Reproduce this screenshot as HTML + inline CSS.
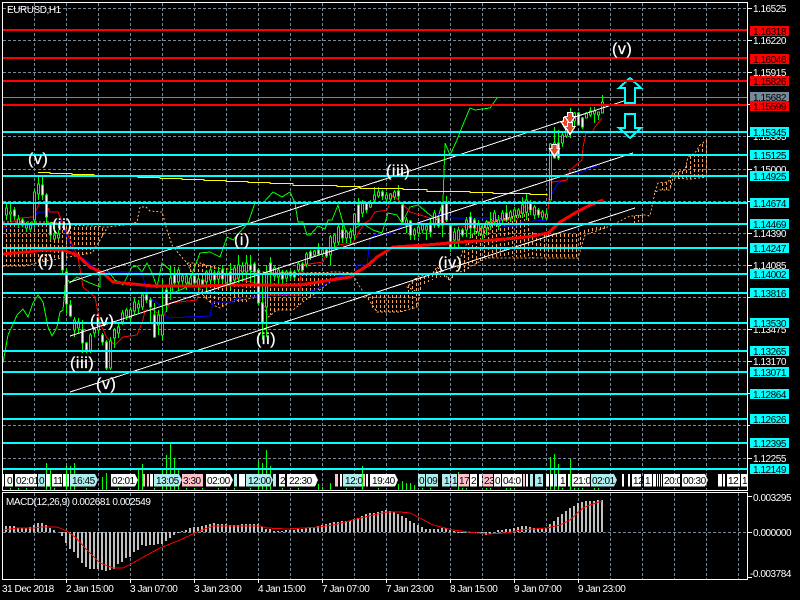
<!DOCTYPE html>
<html><head><meta charset="utf-8"><title>EURUSD,H1</title>
<style>
html,body{margin:0;padding:0;background:#000;width:800px;height:600px;overflow:hidden}
svg{display:block}
text{font-family:"Liberation Sans",sans-serif;font-size:10px;letter-spacing:-.45px}
.w{font-size:16px;fill:#fff;stroke:#fff;stroke-width:.25;letter-spacing:.6px}
</style></head><body>
<svg width="800" height="600" viewBox="0 0 800 600" xmlns="http://www.w3.org/2000/svg">
<rect width="800" height="600" fill="#000"/>
<g shape-rendering="crispEdges" fill="none">
<!-- grid -->
<path stroke="#778899" stroke-dasharray="3 2" d="M34.5 3V490M66.5 3V490M98.5 3V490M130.5 3V490M162.5 3V490M194.5 3V490M226.5 3V490M258.5 3V490M290.5 3V490M322.5 3V490M354.5 3V490M386.5 3V490M418.5 3V490M450.5 3V490M482.5 3V490M514.5 3V490M546.5 3V490M578.5 3V490M610.5 3V490M642.5 3V490M674.5 3V490M706.5 3V490M738.5 3V490"/>
<path stroke="#778899" stroke-dasharray="3 2" d="M34.5 493V579M66.5 493V579M98.5 493V579M130.5 493V579M162.5 493V579M194.5 493V579M226.5 493V579M258.5 493V579M290.5 493V579M322.5 493V579M354.5 493V579M386.5 493V579M418.5 493V579M450.5 493V579M482.5 493V579M514.5 493V579M546.5 493V579M578.5 493V579M610.5 493V579M642.5 493V579M674.5 493V579M706.5 493V579M738.5 493V579"/>
<path stroke="#778899" stroke-dasharray="3 2" d="M3 8.5H747M3 40.5H747M3 72.5H747M3 104.5H747M3 136.5H747M3 169.5H747M3 201.5H747M3 233.5H747M3 265.5H747M3 297.5H747M3 329.5H747M3 361.5H747M3 393.5H747M3 425.5H747M3 458.5H747M3 532.5H747"/>
<!-- cloud hatching -->
<path stroke="#F4A460" stroke-dasharray="3 2" d="M6.5 224V266M10.5 224V266M14.5 224V266M18.5 224V266M22.5 224V266M26.5 224V265M30.5 224V263M34.5 224V262M38.5 224V262M42.5 224V261M46.5 224V260M50.5 224V259M54.5 225V258M58.5 225V258M62.5 225V257M66.5 226V257M70.5 226V256M74.5 227V256M78.5 227V255M82.5 227V255M86.5 227V254M90.5 227V253M94.5 227V248M98.5 227V243M102.5 228V237M190.5 264V282M194.5 264V288M198.5 264V292M202.5 264V295M206.5 265V299M210.5 265V303M214.5 266V305M218.5 267V307M222.5 268V306M226.5 268V304M230.5 268V302M234.5 269V302M238.5 269V302M242.5 269V302M246.5 270V302M250.5 270V300M254.5 270V299M258.5 271V298M262.5 273V305M266.5 273V312M270.5 273V315M274.5 273V312M278.5 273V310M282.5 273V310M286.5 273V310M290.5 273V310M294.5 273V309M298.5 273V305M302.5 273V302M306.5 273V299M310.5 273V296M314.5 273V293M318.5 273V290M322.5 273V287M326.5 273V284M330.5 273V281M334.5 273V278M368.5 297V300M372.5 296V308M376.5 295V311M380.5 295V312M384.5 295V312M388.5 295V312M392.5 295V312M396.5 295V312M400.5 295V312M404.5 295V311M408.5 285V310M412.5 281V309M416.5 278V307M420.5 277V293M424.5 276V284M428.5 275V282M432.5 274V280M436.5 270V278M440.5 271V277M444.5 274V278M448.5 277V280M452.5 275V278M464.5 250V272M468.5 242V269M472.5 235V266M476.5 231V264M480.5 228V262M484.5 225V259M488.5 222V258M492.5 220V258M496.5 219V258M500.5 218V257M504.5 218V257M508.5 217V257M512.5 216V257M516.5 215V257M520.5 215V257M524.5 214V258M528.5 213V258M532.5 232V258M536.5 233V258M540.5 233V258M544.5 234V258M548.5 234V258M552.5 234V258M556.5 234V258M560.5 234V258M564.5 234V258M568.5 234V258M572.5 234V258M576.5 234V258M580.5 232V246M584.5 230V236M588.5 229V234M592.5 228V233M596.5 227V232M600.5 227V231M604.5 226V230M634.5 216V223M638.5 215V222M642.5 215V222M662.5 183V190M666.5 182V190M670.5 180V190M674.5 173V178M678.5 172V178M682.5 171V179M686.5 165V179M690.5 156V179M694.5 154V178M698.5 149V178M702.5 144V177M706.5 140V177"/>
<path stroke="#F4A460" stroke-dasharray="2 2" d="M3 222L50 222L70 225L107 227L125 225L137 222L140 207L146 207L150 211L162 212L167 230L172 245L180 255L187 263L200 263L215 268L258 272L300 273L340 272L352 273L360 287L367 297L377 312L400 312L417 307L420 293L407 287L417 277L433 273L437 267L450 280L457 270L463 250L473 233L490 220L530 212"/>
<path stroke="#F4A460" stroke-dasharray="2 2" d="M3 266L25 266L40 262L92 253L100 240L107 228M187 263L203 295L213 305L220 308L230 302L258 297L263 305L268 317L277 310L293 310L303 302L317 292L337 277M460 272L473 265L487 258L578 258L585 235L610 226L630 216L645 215L650 216L655 192L660 190L670 190L673 178L690 179L707 177M655 192L658 183L668 182L673 173L685 170L688 157L695 153L700 145L707 140"/>
<!-- chikou -->
<path stroke="#00ff00" d="M3 363L8 335L17 315L23 309L28 317L33 303L38 295L43 302L48 327L52 336L57 327L60 312L63 310L66 277L70 283L77 277L90 283L100 287L100 272L107 270L115 280L123 285L132 267L137 266L142 272L147 263L152 273L157 287L162 263L170 270L173 293L187 287L200 253L210 252L220 257L227 237L233 240L240 232L248 223L255 203L263 203L273 192L282 197L290 192L295 203L298 222L303 222L307 235L310 235L318 226L325 229L328 220L332 220L338 205L343 223L347 235L353 230L360 225L365 225L373 230L382 233L388 213L397 215L402 223L410 207L418 205L430 215L437 220L443 202L445 143L450 155L457 140L462 127L470 108L475 110L490 108L497 98"/>
<!-- blue -->
<path stroke="#0000ff" d="M3 228L32 227L37 212L58 212L67 237L75 255L83 258L100 272L142 272L148 297L160 305L167 318L210 316L213 302L233 302L237 298L257 297L307 292L315 290L338 277L355 273L357 265L367 265L370 240L375 234L390 234L403 225L413 225L427 220L440 214L448 215L452 218L500 218L502 226L518 226L520 222L548 220M548 200L558 183L567 180L570 172L583 172L590 168L600 165"/>
<!-- thin red -->
<path stroke="#ff0000" d="M3 227L20 218L33 217L40 202L45 203L50 212L58 212L67 233L78 257L83 287L95 297L100 323L107 338L115 345L123 337L137 335L143 320L145 310L153 310L163 317L170 303L197 300L200 287L207 277L230 276L240 280L257 283L258 295L300 295L300 283L302 265L323 262L327 252L338 245L353 243L360 230L365 223L370 220L375 212L387 210L393 195L402 203L410 212L430 218L437 218L448 225L473 227L480 230L490 230L493 220L517 220L523 207L530 208L545 215M548 210L550 190L552 182L567 180L570 170L582 160L583 147L586 133L592 133L595 127L602 118"/>
</g>
<!-- candles -->
<g shape-rendering="crispEdges">
<path fill="none" stroke="#00ff00" d="M6.5 203V220M10.5 203V222M14.5 207V220M18.5 215V228M22.5 218V227M26.5 222V232M30.5 222V232M34.5 190V228M38.5 175V200M42.5 176V200M46.5 193V225M50.5 222V240M54.5 225V240M58.5 230V240M62.5 248V273M66.5 268V313M70.5 300V317M74.5 317V337M78.5 318V333M82.5 320V353M86.5 342V353M90.5 333V353M94.5 327V337M98.5 320V333M102.5 333V345M106.5 340V370M110.5 337V370M114.5 328V348M118.5 323V338M122.5 310V325M126.5 308V320M130.5 307V322M134.5 298V315M138.5 300V313M142.5 293V310M146.5 292V303M150.5 298V322M154.5 303V338M158.5 310V335M162.5 280V340M166.5 285V312M170.5 265V300M174.5 267V287M178.5 267V290M182.5 273V287M186.5 273V290M190.5 275V287M194.5 273V287M198.5 277V290M202.5 277V287M206.5 270V290M210.5 267V287M214.5 270V285M218.5 268V284M222.5 265V284M226.5 270V288M230.5 263V290M234.5 265V285M238.5 255V283M242.5 262V282M246.5 255V280M250.5 255V282M254.5 262V285M258.5 268V305M262.5 273V340M266.5 265V337M270.5 257V287M274.5 265V280M278.5 267V283M282.5 270V283M286.5 270V282M290.5 270V280M294.5 270V280M298.5 262V272M302.5 262V272M306.5 252V267M310.5 250V260M314.5 250V257M318.5 243V255M322.5 248V257M326.5 247V258M330.5 235V265M334.5 233V247M338.5 225V245M342.5 225V243M346.5 230V243M350.5 228V243M354.5 213V240M358.5 198V225M362.5 200V217M366.5 202V213M370.5 200V208M374.5 187V202M378.5 187V198M382.5 190V200M386.5 192V203M390.5 193V202M394.5 190V200M398.5 185V200M402.5 203V223M406.5 217V233M410.5 220V240M414.5 228V240M418.5 225V237M422.5 223V233M426.5 225V240M430.5 218V237M434.5 210V228M438.5 215V228M442.5 203V237M446.5 196V222M450.5 225V252M454.5 228V247M458.5 227V247M462.5 228V237M466.5 217V237M470.5 212V237M474.5 218V235M478.5 220V236M482.5 225V240M486.5 220V235M490.5 212V230M494.5 210V226M498.5 215V230M502.5 210V225M506.5 205V222M510.5 210V222M514.5 207V222M518.5 208V218M522.5 197V218M526.5 193V220M530.5 200V215M534.5 205V219M538.5 208V218M542.5 210V220M546.5 210V220M550.5 143V200M554.5 127V157M558.5 130V160M562.5 133V147M566.5 128V138M570.5 108V138M574.5 112V127M578.5 112V126M582.5 117V129M586.5 112V118M590.5 107V117M594.5 107V123M598.5 112V120M602.5 95V113"/>
<path fill="#000" stroke="#00ff00" d="M5.5 208h2v7h-2zM9.5 212h2v2h-2zM17.5 219h2v5h-2zM25.5 225h2v3h-2zM29.5 225h2v4h-2zM33.5 192h2v28h-2zM37.5 184h2v10h-2zM53.5 235h2v4h-2zM57.5 234h2v4h-2zM73.5 320h2v10h-2zM77.5 322h2v6h-2zM89.5 335h2v15h-2zM93.5 329h2v4h-2zM97.5 323h2v7h-2zM109.5 341h2v27h-2zM113.5 330h2v8h-2zM117.5 327h2v6h-2zM121.5 313h2v9h-2zM125.5 310h2v6h-2zM129.5 310h2v8h-2zM133.5 302h2v9h-2zM137.5 304h2v4h-2zM141.5 295h2v12h-2zM157.5 315h2v10h-2zM161.5 315h2v20h-2zM169.5 278h2v7h-2zM177.5 270h2v12h-2zM181.5 276h2v5h-2zM185.5 276h2v7h-2zM189.5 278h2v6h-2zM197.5 279h2v6h-2zM205.5 272h2v10h-2zM209.5 270h2v10h-2zM217.5 272h2v7h-2zM225.5 275h2v8h-2zM233.5 268h2v12h-2zM237.5 265h2v13h-2zM241.5 266h2v6h-2zM245.5 263h2v9h-2zM265.5 273h2v34h-2zM273.5 268h2v8h-2zM277.5 270h2v7h-2zM285.5 272h2v6h-2zM297.5 264h2v6h-2zM305.5 254h2v10h-2zM313.5 251h2v4h-2zM321.5 250h2v4h-2zM329.5 237h2v18h-2zM333.5 235h2v8h-2zM337.5 227h2v15h-2zM345.5 232h2v6h-2zM349.5 232h2v6h-2zM353.5 214h2v21h-2zM361.5 202h2v11h-2zM369.5 203h2v4h-2zM373.5 195h2v5h-2zM377.5 192h2v4h-2zM385.5 195h2v4h-2zM389.5 194h2v5h-2zM393.5 192h2v5h-2zM405.5 220h2v5h-2zM413.5 230h2v5h-2zM417.5 227h2v6h-2zM421.5 225h2v5h-2zM425.5 226h2v4h-2zM433.5 213h2v12h-2zM453.5 232h2v8h-2zM457.5 230h2v10h-2zM465.5 220h2v10h-2zM477.5 225h2v7h-2zM481.5 228h2v7h-2zM485.5 222h2v6h-2zM489.5 222h2v4h-2zM493.5 213h2v9h-2zM497.5 220h2v6h-2zM501.5 213h2v7h-2zM509.5 212h2v6h-2zM513.5 210h2v6h-2zM517.5 210h2v5h-2zM521.5 205h2v8h-2zM525.5 200h2v12h-2zM533.5 207h2v8h-2zM541.5 212h2v5h-2zM545.5 214h2v4h-2zM549.5 144h2v56h-2zM553.5 143h2v15h-2zM561.5 135h2v8h-2zM565.5 129h2v7h-2zM573.5 113h2v8h-2zM585.5 113h2v5h-2zM589.5 111h2v4h-2zM593.5 111h2v3h-2zM597.5 112h2v3h-2zM601.5 102h2v11h-2z"/>
<path fill="#fff" stroke="#00ff00" d="M13.5 210h2v6h-2zM21.5 220h2v5h-2zM41.5 185h2v10h-2zM45.5 195h2v22h-2zM49.5 223h2v12h-2zM61.5 250h2v20h-2zM65.5 272h2v32h-2zM69.5 305h2v11h-2zM81.5 330h2v13h-2zM85.5 343h2v7h-2zM101.5 335h2v7h-2zM105.5 342h2v26h-2zM145.5 295h2v5h-2zM149.5 300h2v7h-2zM153.5 315h2v22h-2zM165.5 290h2v15h-2zM173.5 275h2v8h-2zM193.5 276h2v7h-2zM201.5 280h2v4h-2zM213.5 273h2v7h-2zM221.5 270h2v9h-2zM229.5 272h2v10h-2zM249.5 265h2v5h-2zM253.5 264h2v8h-2zM257.5 270h2v33h-2zM261.5 303h2v19h-2zM269.5 263h2v9h-2zM281.5 272h2v7h-2zM289.5 272h2v4h-2zM293.5 272h2v5h-2zM301.5 264h2v6h-2zM309.5 252h2v5h-2zM317.5 250h2v4h-2zM325.5 250h2v6h-2zM341.5 230h2v8h-2zM357.5 205h2v17h-2zM365.5 203h2v7h-2zM381.5 192h2v4h-2zM397.5 191h2v5h-2zM401.5 205h2v17h-2zM409.5 221h2v14h-2zM429.5 223h2v9h-2zM437.5 218h2v8h-2zM441.5 205h2v20h-2zM445.5 203h2v17h-2zM449.5 226h2v21h-2zM461.5 230h2v5h-2zM469.5 217h2v11h-2zM473.5 220h2v8h-2zM505.5 213h2v7h-2zM529.5 203h2v7h-2zM537.5 210h2v5h-2zM557.5 143h2v15h-2zM569.5 117h2v13h-2zM577.5 113h2v12h-2zM581.5 118h2v9h-2z"/>
</g>
<g shape-rendering="crispEdges" fill="none">
<!-- thick red -->
<path stroke="#ff0000" stroke-width="3" d="M3 254L27 252L43 250L63 250L77 255L90 267L103 273L113 282L133 284L153 286L200 286L233 285L258 285L300 285L350 277L357 272L367 266L377 257L393 247L427 245L460 242L493 240L527 237L548 233L560 222L575 213L590 205L603 200"/>
<!-- yellow -->
<path stroke="#ffff00" d="M38 172.5H50V173.5H72V174.5H94V175.5H116V176.5H138V177.5H160V178.5H182V179.5H204V180.5H226V181.5H248V182.5H270V183.5H293V185.5H337V186.5H360V188.5H403V189.5H427V191.5H470V192.5H493V193.5H530V194.5H547V195.5"/>
<!-- white trend lines -->
<path stroke="#fff" d="M70 282L633 98M70 336L633 153M70 392L635 208"/>
<!-- volume -->
<path stroke="#00ff00" d="M46.5 463V490M50.5 470V490M66.5 465V490M70.5 466V490M74.5 463V490M102.5 477V490M106.5 473V490M138.5 470V490M142.5 464V490M162.5 470V490M166.5 455V490M170.5 444V490M174.5 458V490M178.5 470V490M258.5 461V490M262.5 463V490M266.5 450V490M270.5 466V490M318.5 484V490M322.5 487V490M330.5 483V490M362.5 466V490M398.5 484V490M402.5 481V490M406.5 483V490M410.5 483V490M414.5 485V490M458.5 472V490M550.5 457V490M554.5 454V490M558.5 464V490M570.5 459V490"/>
<path stroke="#00ff00" d="M10.5 488V490M18.5 488V490M26.5 488V490M54.5 488V490M86.5 488V490M118.5 488V490M154.5 488V490M186.5 488V490M194.5 488V490M202.5 488V490M218.5 488V490M234.5 488V490M250.5 488V490M282.5 488V490M298.5 488V490M346.5 488V490M378.5 488V490M422.5 488V490M430.5 488V490M462.5 488V490M466.5 488V490M486.5 488V490M490.5 488V490M506.5 488V490M510.5 488V490M514.5 488V490M562.5 488V490M574.5 488V490M578.5 488V490M582.5 488V490M594.5 488V490M598.5 488V490"/>
<!-- grey level -->
<path stroke="#778899" d="M3 97.5H747"/>
<!-- cyan arrows -->
<path fill="#000" stroke="#00ffff" stroke-width="2" d="M630 78L619 88H625V103H635V88H641Z"/>
<path fill="#000" stroke="#00ffff" stroke-width="2" d="M625 114H635V128H641L630 138L619 128H625Z"/>
<!-- horizontal levels -->
<path stroke="#ff0000" stroke-width="2" d="M3 30H747M3 58H747M3 81H747M3 105H747"/>
<path stroke="#00ffff" stroke-width="2" d="M3 132H747M3 155H747M3 176H747M3 203H747M3 224H747M3 248H747M3 274H747M3 293H747M3 323H747M3 351H747M3 372H747M3 394H747M3 419H747M3 443H747M3 469H747"/>
</g>
<!-- signal arrows -->
<g shape-rendering="crispEdges">
<g transform="translate(554.5 151)"><path fill="#fff" d="M-3-7H3V-3H6L0 7L-6-3H-3Z"/><path fill="#e8462a" d="M-2-6H2V-2H4L0 4L-4-2H-2Z"/></g>
<g transform="translate(566 124)"><path fill="#fff" d="M-3-7H3V-3H6L0 7L-6-3H-3Z"/><path fill="#e8462a" d="M-2-6H2V-2H4L0 4L-4-2H-2Z"/></g>
<g transform="translate(570 119)"><path fill="#fff" d="M-3-7H3V-3H6L0 7L-6-3H-3Z"/><path fill="#e8462a" d="M-2-6H2V-2H4L0 4L-4-2H-2Z"/></g>
<g transform="translate(570 129)"><path fill="#fff" d="M-3-7H3V-3H6L0 7L-6-3H-3Z"/><path fill="#e8462a" d="M-2-6H2V-2H4L0 4L-4-2H-2Z"/></g>
</g>
<!-- wave labels -->
<g>
<text class="w" x="28" y="164">(v)</text>
<text class="w" x="52" y="230">(ii)</text>
<text class="w" x="38" y="266">(i)</text>
<text class="w" x="90" y="326">(iv)</text>
<text class="w" x="70" y="368">(iii)</text>
<text class="w" x="96" y="389">(v)</text>
<text class="w" x="234" y="245">(i)</text>
<text class="w" x="256" y="344">(ii)</text>
<text class="w" x="386" y="176">(iii)</text>
<text class="w" x="438" y="268">(iv)</text>
<text class="w" x="612" y="54">(v)</text>
</g>
<!-- time tags -->
<g shape-rendering="crispEdges" transform="translate(0 474) scale(1 .95) translate(0 -474)">
<path fill="#fff" d="M3 474h1v13H3zM5 474h1v13H5zM6 474h7v13H6zM15 474h22v13H15zM46 474h4v13h-4zM52 474h10v13H52zM63 474h3v13h-3zM67 474h2v13h-2zM111 474h24l3 6.5l-3 6.5H111zM150 474h3v13h-3zM206 474h24l3 6.5l-3 6.5H206zM239 474h6v13h-6zM279 474h6v13h-6zM287 474h28l3 6.5l-3 6.5H287zM340 474h2v13h-2zM366 474h2v13h-2zM370 474h25l3 6.5l-3 6.5H370zM470 474h7v13h-7zM479 474h3v13h-3zM494 474h7v13h-7zM502 474h20v13H502zM526 474h2v13h-2zM546 474h3v13h-3zM550 474h3v13h-3zM558 474h8v13h-8zM568 474h2v13h-2zM572 474h18v13H572zM622 474h2v13h-2zM628 474h2v13h-2zM632 474h9v13h-9zM644 474h8v13h-8zM653 474h3v13h-3zM657 474h1v13h-1zM659 474h1v13h-1zM661 474h1v13h-1zM663 474h17v13H663zM682 474h23l3 6.5l-3 6.5H682zM718 474h4v13h-4zM723 474h2v13h-2zM727 474h13v13H727zM741 474h6v13h-6z"/>
<path fill="#AFEEEE" d="M38 474h7v13h-7zM70 474h25l3 6.5l-3 6.5H70zM154 474h25l3 6.5l-3 6.5H154zM234 474h3v13h-3zM246 474h24l3 6.5l-3 6.5H246zM273 474h3v13h-3zM343 474h19v13H343zM418 474h7v13h-7zM426 474h12v13H426zM442 474h8v13h-8zM451 474h6v13h-6zM530 474h3v13h-3zM535 474h8v13h-8zM554 474h3v13h-3zM591 474h23l3 6.5l-3 6.5H591z"/>
<path fill="#FFC0CB" d="M143 474h2v13h-2zM147 474h2v13h-2zM182 474h21v13H182zM335 474h3v13h-3zM363 474h2v13h-2zM458 474h11v13H458zM483 474h10v13H483zM523 474h2v13h-2z"/>
</g>
<g fill="#000">
<text x="7" y="484">0</text><text x="16" y="484">02:01</text><text x="39" y="484">0</text><text x="53" y="484">11</text>
<text x="72" y="484">16:45</text><text x="112" y="484">02:01</text><text x="156" y="484">13:05</text><text x="183" y="484">3:30</text>
<text x="207" y="484">02:00</text><text x="248" y="484">12:00</text><text x="280" y="484">2</text><text x="289" y="484">22:30</text>
<text x="345" y="484">12:0</text><text x="372" y="484">19:40</text>
<text x="419" y="484">0</text><text x="427" y="484">09</text><text x="444" y="484">1</text><text x="452" y="484">1</text><text x="459" y="484">17</text><text x="471" y="484">2</text><text x="484" y="484">23</text><text x="495" y="484">0</text><text x="503" y="484">04:0</text><text x="537" y="484">1</text><text x="560" y="484">1</text><text x="573" y="484">21:0</text><text x="592" y="484">02:01</text><text x="633" y="484">12</text><text x="645" y="484">1</text><text x="664" y="484">20:0</text><text x="683" y="484">00:30</text><text x="728" y="484">12</text><text x="742" y="484">1</text>
</g>
<g shape-rendering="crispEdges">
<!-- MACD histogram -->
<path fill="none" stroke="#c0c0c0" stroke-width="2" d="M6 532V526M10 532V526M14 532V526M18 532V528M22 532V528M26 532V528M30 532V527M34 532V525M38 532V523M42 532V523M46 532V525M50 532V528M54 532V530M62 532V536M66 532V543M70 532V549M74 532V552M78 532V558M82 532V563M86 532V567M90 532V569M94 532V569M98 532V569M102 532V570M106 532V571M110 532V570M114 532V569M118 532V564M122 532V562M126 532V558M130 532V557M134 532V552M138 532V550M142 532V545M146 532V546M150 532V545M154 532V545M158 532V544M162 532V544M166 532V541M170 532V538M174 532V535M178 532V533M182 532V531M186 532V530M190 532V528M194 532V527M198 532V527M202 532V526M206 532V525M210 532V524M214 532V523M218 532V524M222 532V524M226 532V524M230 532V525M234 532V525M238 532V525M242 532V524M246 532V524M250 532V524M254 532V524M258 532V524M262 532V527M266 532V529M270 532V529M274 532V531M278 532V531M282 532V531M286 532V530M290 532V530M294 532V530M298 532V529M302 532V529M306 532V528M310 532V527M314 532V527M318 532V526M322 532V525M326 532V524M330 532V523M334 532V522M338 532V522M342 532V521M346 532V521M350 532V521M354 532V519M358 532V518M362 532V516M366 532V514M370 532V513M374 532V513M378 532V512M382 532V511M386 532V510M390 532V511M394 532V512M398 532V514M402 532V516M406 532V518M410 532V521M414 532V523M418 532V525M422 532V527M426 532V529M430 532V529M434 532V529M438 532V529M442 532V528M446 532V528M450 532V530M454 532V531M458 532V533M462 532V533M466 532V532.5M474 532V533M478 532V533M482 532V534M486 532V535M490 532V534M494 532V532.5M498 532V530M502 532V530M506 532V529M510 532V529M514 532V528M518 532V527M522 532V526M526 532V526M530 532V527M534 532V528M538 532V528M542 532V528M546 532V528M550 532V524M554 532V521M558 532V517M562 532V514M566 532V511M570 532V508M574 532V506M578 532V503M582 532V502M586 532V501M590 532V501M594 532V501M598 532V500M602 532V500"/>
<path fill="none" stroke="#ff0000" d="M3 530L17 528L33 528L43 527L57 527L67 531L75 537L87 550L100 563L113 568L123 568L133 563L147 555L160 548L180 540L197 532L213 526L227 526L260 526L267 528L287 529L320 527L333 525L353 520L373 515L387 512L400 512L410 513L420 518L433 525L453 530L477 533L487 534L507 533L520 530L547 528L560 525L570 520L583 508L590 505L602 501"/>
<!-- borders & ticks -->
<path fill="none" stroke="#fff" d="M2.5 2.5H747.5V490.5H2.5ZM2.5 492.5H747.5V579.5H2.5Z"/>
<path fill="none" stroke="#fff" d="M747 8.5h5M747 40.5h5M747 72.5h5M747 104.5h3M747 136.5h3M747 169.5h5M747 201.5h3M747 233.5h5M747 265.5h5M747 297.5h3M747 329.5h5M747 361.5h5M747 393.5h3M747 425.5h3M747 458.5h5M747 496.5h5M747 532.5h5M747 577.5h5M66.5 580v3M130.5 580v3M194.5 580v3M258.5 580v3M322.5 580v3M386.5 580v3M450.5 580v3M514.5 580v3M578.5 580v3"/>
</g>
<!-- labels -->
<g fill="#fff">
<text x="7" y="13">EURUSD,H1</text>
<text x="6" y="505">MACD(12,26,9) 0.002681 0.002549</text>
<text x="753" y="12">1.16525</text><text x="753" y="44">1.16220</text><text x="753" y="76">1.15915</text><text x="753" y="140">1.15305</text><text x="753" y="173">1.15000</text><text x="753" y="237">1.14390</text><text x="753" y="269">1.14085</text><text x="753" y="333">1.13475</text><text x="753" y="365">1.13170</text><text x="753" y="462">1.12255</text>
<text x="753" y="501">0.003295</text><text x="753" y="536">0.000000</text><text x="750" y="577">-0.003784</text>
<text x="2" y="592">31 Dec 2018</text><text x="66" y="592">2 Jan 15:00</text><text x="130" y="592">3 Jan 07:00</text><text x="194" y="592">3 Jan 23:00</text><text x="258" y="592">4 Jan 15:00</text><text x="322" y="592">7 Jan 07:00</text><text x="386" y="592">7 Jan 23:00</text><text x="450" y="592">8 Jan 15:00</text><text x="514" y="592">9 Jan 07:00</text><text x="578" y="592">9 Jan 23:00</text>
</g>
<g shape-rendering="crispEdges">
<path fill="#778899" d="M750 92h39v10h-39z"/>
<path fill="#ff0000" d="M750 26h39v10h-39zM750 54h39v10h-39zM750 76h39v10h-39zM750 101h39v10h-39z"/>
<path fill="#00ffff" d="M750 127h39v10h-39zM750 150h39v10h-39zM750 171h39v10h-39zM750 198h39v10h-39zM750 219h39v10h-39zM750 243h39v10h-39zM750 269h39v10h-39zM750 288h39v10h-39zM750 318h39v10h-39zM750 346h39v10h-39zM750 367h39v10h-39zM750 389h39v10h-39zM750 414h39v10h-39zM750 438h39v10h-39zM750 464h39v10h-39z"/>
</g>
<g fill="#000">
<text x="753" y="101">1.15682</text>
<text x="753" y="35">1.16318</text><text x="753" y="63">1.16046</text><text x="753" y="85">1.15826</text><text x="753" y="110">1.15599</text>
<text x="753" y="136">1.15345</text><text x="753" y="159">1.15125</text><text x="753" y="180">1.14925</text><text x="753" y="207">1.14674</text><text x="753" y="228">1.14469</text><text x="753" y="252">1.14247</text><text x="753" y="278">1.14002</text><text x="753" y="297">1.13816</text><text x="753" y="327">1.13530</text><text x="753" y="355">1.13265</text><text x="753" y="376">1.13071</text><text x="753" y="398">1.12864</text><text x="753" y="423">1.12626</text><text x="753" y="447">1.12395</text><text x="753" y="473">1.12149</text>
</g>
</svg>
</body></html>
